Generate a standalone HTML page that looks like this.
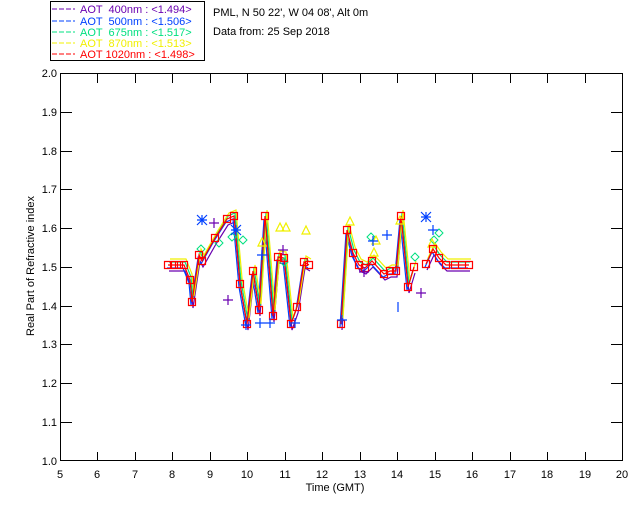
<!DOCTYPE html>
<html><head><meta charset="utf-8"><style>
html,body{margin:0;padding:0;background:#fff;width:640px;height:512px;overflow:hidden}
svg text{font-family:"Liberation Sans",sans-serif;font-size:11px}
</style></head><body>
<svg width="640" height="512" xmlns="http://www.w3.org/2000/svg">
<rect x="50.5" y="1.5" width="154" height="59" fill="none" stroke="#000"/>
<g style="font-size:11.5px">
<line x1="52" y1="9" x2="75" y2="9" stroke="#6a00b0" stroke-dasharray="5,2"/><text x="80" y="13" fill="#6a00b0" xml:space="preserve">AOT  400nm : &lt;1.494&gt;</text>
<line x1="52" y1="21" x2="75" y2="21" stroke="#0040ff" stroke-dasharray="5,2"/><text x="80" y="25" fill="#0040ff" xml:space="preserve">AOT  500nm : &lt;1.506&gt;</text>
<line x1="52" y1="32" x2="75" y2="32" stroke="#00e080" stroke-dasharray="5,2"/><text x="80" y="36" fill="#00e080" xml:space="preserve">AOT  675nm : &lt;1.517&gt;</text>
<line x1="52" y1="43" x2="75" y2="43" stroke="#f0f000" stroke-dasharray="5,2"/><text x="80" y="47" fill="#f0f000" xml:space="preserve">AOT  870nm : &lt;1.513&gt;</text>
<line x1="52" y1="54" x2="75" y2="54" stroke="#ff0000" stroke-dasharray="5,2"/><text x="80" y="58" fill="#ff0000" xml:space="preserve">AOT 1020nm : &lt;1.498&gt;</text>
</g>
<text x="213" y="16">PML, N 50 22', W 04 08', Alt 0m</text>
<text x="213" y="35">Data from: 25 Sep 2018</text>
<rect x="60.5" y="73.5" width="562" height="387" fill="none" stroke="#000"/>
<g stroke="#000">
<path d="M97.5 461v-9M135.5 461v-9M172.5 461v-9M210.5 461v-9M247.5 461v-9M285.5 461v-9M322.5 461v-9M360.5 461v-9M397.5 461v-9M435.5 461v-9M472.5 461v-9M510.5 461v-9M547.5 461v-9M585.5 461v-9"/>
<path d="M97.5 74v9M135.5 74v9M172.5 74v9M210.5 74v9M247.5 74v9M285.5 74v9M322.5 74v9M360.5 74v9M397.5 74v9M435.5 74v9M472.5 74v9M510.5 74v9M547.5 74v9M585.5 74v9"/>
<path d="M61 422.5h11M61 383.5h11M61 344.5h11M61 306.5h11M61 267.5h11M61 228.5h11M61 189.5h11M61 151.5h11M61 112.5h11"/>
<path d="M622 422.5h-11M622 383.5h-11M622 344.5h-11M622 306.5h-11M622 267.5h-11M622 228.5h-11M622 189.5h-11M622 151.5h-11M622 112.5h-11"/>
</g>
<g text-anchor="end">
<text x="57" y="465">1.0</text><text x="57" y="426">1.1</text><text x="57" y="387">1.2</text><text x="57" y="348">1.3</text><text x="57" y="310">1.4</text><text x="57" y="271">1.5</text><text x="57" y="232">1.6</text><text x="57" y="193">1.7</text><text x="57" y="155">1.8</text><text x="57" y="116">1.9</text><text x="57" y="77">2.0</text>
</g>
<g text-anchor="middle">
<text x="60" y="478">5</text><text x="97" y="478">6</text><text x="135" y="478">7</text><text x="172" y="478">8</text><text x="210" y="478">9</text><text x="247" y="478">10</text><text x="285" y="478">11</text><text x="322" y="478">12</text><text x="360" y="478">13</text><text x="397" y="478">14</text><text x="435" y="478">15</text><text x="472" y="478">16</text><text x="510" y="478">17</text><text x="547" y="478">18</text><text x="585" y="478">19</text><text x="622" y="478">20</text>
<text x="335" y="491">Time (GMT)</text>
<text transform="translate(34,266) rotate(-90)">Real Part of Refractive index</text>
</g>
<defs>
<g id="d"><polyline points="168,265 174,265 179,265 184,265 190,280 192,302 199,255 202,261 215,238 227,219 234,216 240,284 247,324 253,271 259,310 265,216 273,316 278,257 284,258 291,324 297,307 304,262 309,265"/><polyline points="341,324 347,230 353,253 359,265 365,268 372,261 384,274 390,271 396,271 401,216 408,287 414,267"/><polyline points="426,264 433,249 439,258 446,265 455,265 462,265 469,265"/></g>
</defs>
<g fill="none" stroke-width="1.2">
<use href="#d" stroke="#6a00b0" transform="translate(1,6)"/>
<use href="#d" stroke="#0040ff" transform="translate(-1,3)"/>
<use href="#d" stroke="#00e080" transform="translate(1,-3)"/>
<use href="#d" stroke="#f0f000" transform="translate(2,-6)"/>
<use href="#d" stroke="#ff0000"/>
</g>
<g fill="none" stroke="#00e080" stroke-width="1">
<path d="M228 237l4 -4 4 4 -4 4zM239 240l4 -4 4 4 -4 4zM215 243l4 -4 4 4 -4 4zM280 262l4 -4 4 4 -4 4zM430 240l4 -4 4 4 -4 4zM435 233l4 -4 4 4 -4 4zM197 249l4 -4 4 4 -4 4zM367 237l4 -4 4 4 -4 4zM411 257l4 -4 4 4 -4 4z"/>
</g>
<g fill="none" stroke="#f0f000" stroke-width="1.2">
<path d="M276 231l4 -8 4 8zM282 231l4 -8 4 8zM302 234l4 -8 4 8zM396 224l4 -8 4 8zM346 225l4 -8 4 8zM372 244l4 -8 4 8zM428 247l4 -8 4 8zM258 246l4 -8 4 8zM370 256l4 -8 4 8z"/>
</g>
<g fill="none" stroke="#ff0000" stroke-width="1.2">
<path d="M164.5 261.5h7v7h-7zM170.5 261.5h7v7h-7zM175.5 261.5h7v7h-7zM180.5 261.5h7v7h-7zM186.5 276.5h7v7h-7zM188.5 298.5h7v7h-7zM195.5 251.5h7v7h-7zM198.5 257.5h7v7h-7zM211.5 234.5h7v7h-7zM223.5 215.5h7v7h-7zM230.5 212.5h7v7h-7zM236.5 280.5h7v7h-7zM243.5 320.5h7v7h-7zM249.5 267.5h7v7h-7zM255.5 306.5h7v7h-7zM261.5 212.5h7v7h-7zM269.5 312.5h7v7h-7zM274.5 253.5h7v7h-7zM280.5 254.5h7v7h-7zM287.5 320.5h7v7h-7zM293.5 303.5h7v7h-7zM300.5 258.5h7v7h-7zM305.5 261.5h7v7h-7z"/>
<path d="M337.5 320.5h7v7h-7zM343.5 226.5h7v7h-7zM349.5 249.5h7v7h-7zM355.5 261.5h7v7h-7zM361.5 264.5h7v7h-7zM368.5 257.5h7v7h-7zM380.5 270.5h7v7h-7zM386.5 267.5h7v7h-7zM392.5 267.5h7v7h-7zM397.5 212.5h7v7h-7zM404.5 283.5h7v7h-7zM410.5 263.5h7v7h-7zM422.5 260.5h7v7h-7zM429.5 245.5h7v7h-7zM435.5 254.5h7v7h-7zM442.5 261.5h7v7h-7zM451.5 261.5h7v7h-7zM458.5 261.5h7v7h-7zM465.5 261.5h7v7h-7z"/>
</g>
<g stroke="#0040ff" stroke-width="1.2">
<path d="M202 215l0 10M197 220h10M197 215l10 10M207 215l-10 10M236 225v10M231 230h10M231 225l10 10M241 225l-10 10M262 250v10M257 255h10M246 320v10M241 325h10M270 318v10M265 323h10M295 318v10M290 323h10M373 236v10M368 241h10M387 230v10M382 235h10M426 212v10M421 217h10M421 212l10 10M431 212l-10 10M433 225v10M428 230h10M398 312v-10M260 318v10M255 323h10M342 315v10M337 320h10"/>
</g>
<g stroke="#6a00b0" stroke-width="1.2">
<path d="M214 218v10M209 223h10M228 295v10M223 300h10M421 288v10M416 293h10M283 245v10M278 250h10M364 267v10M359 272h10"/>
</g>
</svg>
</body></html>
